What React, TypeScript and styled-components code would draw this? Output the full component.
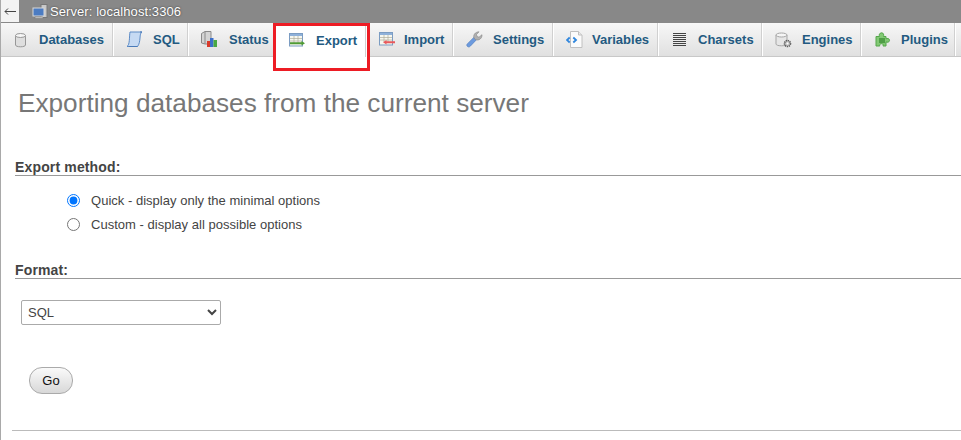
import React from "react";
import styled, { createGlobalStyle } from "styled-components";

const Global = createGlobalStyle`
  html, body { margin: 0; padding: 0; background: #fff; overflow: hidden; }
  body { font-family: "Liberation Sans", Arial, sans-serif; color: #444; font-size: 13px; }
`;

const Page = styled.div`
  position: relative;
  width: 961px;
  height: 440px;
  overflow: hidden;
  border-left: 1px solid #a9a9a9;
  box-sizing: border-box;
`;

const TopBar = styled.div`
  display: flex;
  align-items: center;
  height: 23px;
  background: #888;
  color: #fff;
  font-size: 13px;
`;

const BackButton = styled.div`
  width: 18px;
  height: 22px;
  margin-bottom: 1px;
  background: #f3f3f3;
  display: flex;
  align-items: center;
  justify-content: center;
  color: #444;
  svg { display: block; }
`;

const Crumb = styled.div`
  display: flex;
  align-items: center;
  gap: 2px;
  margin-left: 13px;
  letter-spacing: 0.08px;
  text-shadow: 0 0 2px #333;
  svg { display: block; }
`;

const TabBar = styled.nav`
  display: flex;
  height: 33px;
  background: linear-gradient(#f7f7f7, #e0e0e0);
  border-bottom: 1px solid #c8c8c8;
`;

const Tab = styled.a<{ $w: number; $active?: boolean; $gap: number }>`
  flex: none;
  box-sizing: border-box;
  width: ${(p) => p.$w}px;
  height: ${(p) => (p.$active ? 34 : 33)}px;
  display: flex;
  align-items: center;
  padding-left: ${(p) => p.$gap}px;
  border-right: 1px solid #fff;
  box-shadow: inset -1px 0 0 #d0d0d0;
  background: ${(p) => (p.$active ? "#fff" : "transparent")};
  color: #235a81;
  font-weight: 700;
  font-size: 13px;
  svg { display: block; flex: none; }
`;

const TabLabel = styled.span<{ $pad: number }>`
  margin-left: ${(p) => p.$pad}px;
`;

const Highlight = styled.div`
  position: absolute;
  left: 272px;
  top: 23px;
  width: 97px;
  height: 48px;
  box-sizing: border-box;
  border: 3px solid #ed1c24;
  pointer-events: none;
`;

const Content = styled.main`
  padding: 31px 0 0 14px;
`;

const Title = styled.h2`
  margin: 0 0 0 3px;
  font-size: 26.2px;
  line-height: 30px;
  font-weight: 400;
  color: #777;
`;

const SectionHeading = styled.h3`
  margin: 0;
  font-size: 14px;
  line-height: 16px;
  font-weight: 700;
  letter-spacing: 0.15px;
  color: #444;
  border-bottom: 1px solid #999;
`;

const MethodSection = styled.section`
  margin-top: 41px;
`;

const Options = styled.div`
  padding: 16px 0 0 52px;
  display: flex;
  flex-direction: column;
  gap: 8px;
`;

const OptionRow = styled.label`
  display: flex;
  align-items: center;
  height: 16px;
  font-size: 13px;
  letter-spacing: 0.02px;
  color: #444;
`;

const Radio = styled.input`
  width: 13px;
  height: 13px;
  margin: 0 11px 0 0;
  flex: none;
`;

const FormatSection = styled.section`
  margin-top: 30px;
`;

const FormatSelect = styled.select`
  display: block;
  width: 200px;
  height: 25px;
  margin: 21px 0 0 6px;
  padding: 0 2px;
  background: #fff;
  border: 1px solid #aaa;
  border-radius: 2px;
  font-family: "Liberation Sans", Arial, sans-serif;
  font-size: 13px;
  color: #444;
`;

const GoButton = styled.button`
  display: block;
  width: 44px;
  height: 27px;
  margin: 42px 0 0 14px;
  padding: 0;
  border: 1px solid #aaa;
  border-radius: 13px;
  background: linear-gradient(#fafafa, #d8d8d8);
  font-family: "Liberation Sans", Arial, sans-serif;
  font-size: 13px;
  color: #111;
`;

const Rule = styled.hr`
  margin: 36px 0 0 -3px;
  border: 0;
  border-top: 1px solid #bbb;
`;

const DbIcon = () => (
  <svg width="16" height="16" viewBox="0 0 16 16">
    <path d="M1.500 3.500v9.500c0 1 2.200 1.800 5 1.800s5-.8 5-1.800V3.500z" fill="#dedede" stroke="#979797" />
    <ellipse cx="6.500" cy="3.500" rx="5" ry="2" fill="#f6f6f6" stroke="#979797" />
  </svg>
);
const SqlIcon = () => (
  <svg width="17" height="17" viewBox="0 0 17 17">
    <path d="M4 1h12c-1.500.8-1.800 3-2 6s-.8 6.500-2.500 8.500H1c1.500-.8 2-3 2.300-6S3.600 3 4 1z" fill="#c6daf3" stroke="#5c8bc6" />
    <path d="M3 15.500h8.500M14 1h2" stroke="#4a7ab8" />
  </svg>
);
const StatusIcon = () => (
  <svg width="17" height="17" viewBox="0 0 17 17">
    <path d="M.5 2.500L4 .5h6v12.500H4L.5 12z" fill="#d4d4d4" stroke="#8a8a8a" />
    <path d="M4 .8v12" stroke="#8a8a8a" />
    <rect x="6" y="10" width="3" height="6" fill="#d93a2b" />
    <rect x="9" y="7" width="3.500" height="9" fill="#3b6fc9" />
    <rect x="12.500" y="9" width="3.500" height="7" fill="#49a942" />
  </svg>
);
const TableArrow = ({ flip }: { flip?: boolean }) => (
  <svg width="17" height="15" viewBox="0 0 17 15">
    <rect x=".5" y=".5" width="13" height="12.500" fill="#f6f7ef" stroke="#7b9cc2" />
    <rect x="1" y="1" width="12" height="2" fill="#8fb1d9" />
    <path d="M1 5.500h12M1 8h12M5 3v7M9 3v7" stroke="#b0ae9c" strokeWidth=".7" />
    {flip ? (
      <path d="M16 9.200H7.500V8L4 10.200l3.500 2.200v-1.200H16z" fill="#e8595c" />
    ) : (
      <path d="M1 9.200h11.500V8L16 10.200l-3.500 2.200v-1.200H1z" fill="#4f9a34" />
    )}
  </svg>
);
const WrenchIcon = () => (
  <svg width="17" height="17" viewBox="0 0 17 17">
    <path d="M1.500 15.500c-1-1-1-1.800 0-2.800l6.500-6.500 2.500 2.500-6.200 6.500c-1 1-1.800 1-2.800.3z" fill="#6c9ade" stroke="#4a78bc" strokeWidth=".6" />
    <path d="M8 7c-1-3 1-6 5-6.200L10.500 3.500l.5 2 2 .7 3-2.500c.3 3.500-3 6.300-6.300 5z" fill="#b0b0b0" stroke="#858585" strokeWidth=".6" />
  </svg>
);
const VariablesIcon = () => (
  <svg width="17" height="17" viewBox="0 0 17 17">
    <path d="M4.500.5h8l3.500 3.500v12.500H4.500z" fill="#fbfbfb" stroke="#c0c0c0" />
    <path d="M12.500.5v3.500H16" fill="#e8e8e8" stroke="#c0c0c0" />
    <path d="M3.700 6.500L1 9l2.700 2.500M7.300 6.500L10 9l-2.700 2.500" fill="none" stroke="#2f86dd" strokeWidth="1.800" />
  </svg>
);
const CharsetIcon = () => (
  <svg width="13" height="13" viewBox="0 0 13 13">
    <path d="M0 .5h13M0 2.500h13M0 4.500h13M0 6.500h13M0 8.500h13M0 10.500h13M0 12.500h13" stroke="#444" strokeWidth="1" />
  </svg>
);
const EnginesIcon = () => (
  <svg width="17" height="16" viewBox="0 0 17 16">
    <path d="M1 3v9c0 1 2 1.800 5.500 1.800s5.500-.8 5.500-1.800V3z" fill="#e6e6e6" stroke="#a5a5a5" />
    <ellipse cx="6.500" cy="3" rx="5.500" ry="2" fill="#f5f5f5" stroke="#a5a5a5" />
    <circle cx="12.500" cy="11.500" r="3" fill="#c4c4c4" stroke="#5f5f5f" strokeWidth="1.600" strokeDasharray="1.300 .7" />
    <circle cx="12.500" cy="11.500" r="1" fill="#fff" />
  </svg>
);
const PluginIcon = () => (
  <svg width="16" height="15" viewBox="0 0 16 15">
    <path d="M1 4.500h3.500c-.6-1.500-.2-3.500 2-3.700 2.200 0 2.500 2.200 2 3.700H11v2.300c1.200-.6 3.500-.5 3.500 1.500s-2.300 2.300-3.500 1.600V14H8c.5-1 0-2.300-1.500-2.300S4.300 13 4.800 14H1z" fill="#82c974" stroke="#54a64b" />
    <rect x="4" y="6" width="6" height="5" fill="#4f9e46" />
  </svg>
);
const ServerIcon = () => (
  <svg width="16" height="16" viewBox="0 0 16 16">
    <rect x="9" y=".5" width="6" height="13" fill="#c8c8c8" stroke="#777" />
    <rect x="1" y="4" width="11" height="8" fill="#4c7cc2" stroke="#d8d8d8" />
    <path d="M3 13h8v1.500H3z" fill="#d5d5d5" stroke="#777" strokeWidth=".6" />
  </svg>
);

const tabs = [
  { label: "Databases", w: 113, gap: 13, pad: 9, icon: <DbIcon /> },
  { label: "SQL", w: 75, gap: 12, pad: 10, icon: <SqlIcon /> },
  { label: "Status", w: 87, gap: 12, pad: 11, icon: <StatusIcon /> },
  { label: "Export", w: 91, gap: 13, pad: 10, icon: <TableArrow />, active: true },
  { label: "Import", w: 87, gap: 12, pad: 8, icon: <TableArrow flip /> },
  { label: "Settings", w: 100, gap: 12, pad: 10, icon: <WrenchIcon /> },
  { label: "Variables", w: 105, gap: 12, pad: 9, icon: <VariablesIcon /> },
  { label: "Charsets", w: 104, gap: 14, pad: 12, icon: <CharsetIcon /> },
  { label: "Engines", w: 99, gap: 12, pad: 10, icon: <EnginesIcon /> },
  { label: "Plugins", w: 94, gap: 13, pad: 10, icon: <PluginIcon /> },
];

export default function App() {
  return (
    <Page>
      <Global />
      <TopBar>
        <BackButton>
          <svg width="12" height="7" viewBox="0 0 12 7">
            <path d="M12 3.500H1M4 .5L1 3.500l3 3" fill="none" stroke="#444" />
          </svg>
        </BackButton>
        <Crumb>
          <ServerIcon />
          <span>Server: localhost:3306</span>
        </Crumb>
      </TopBar>
      <TabBar>
        {tabs.map((t) => (
          <Tab key={t.label} $w={t.w} $gap={t.gap} $active={t.active}>
            {t.icon}
            <TabLabel $pad={t.pad}>{t.label}</TabLabel>
          </Tab>
        ))}
      </TabBar>
      <Highlight />
      <Content>
        <Title>Exporting databases from the current server</Title>
        <MethodSection>
          <SectionHeading>Export method:</SectionHeading>
          <Options>
            <OptionRow>
              <Radio type="radio" name="m" defaultChecked />
              Quick - display only the minimal options
            </OptionRow>
            <OptionRow>
              <Radio type="radio" name="m" />
              Custom - display all possible options
            </OptionRow>
          </Options>
        </MethodSection>
        <FormatSection>
          <SectionHeading>Format:</SectionHeading>
          <FormatSelect defaultValue="SQL">
            <option>SQL</option>
          </FormatSelect>
        </FormatSection>
        <GoButton>Go</GoButton>
        <Rule />
      </Content>
    </Page>
  );
}
